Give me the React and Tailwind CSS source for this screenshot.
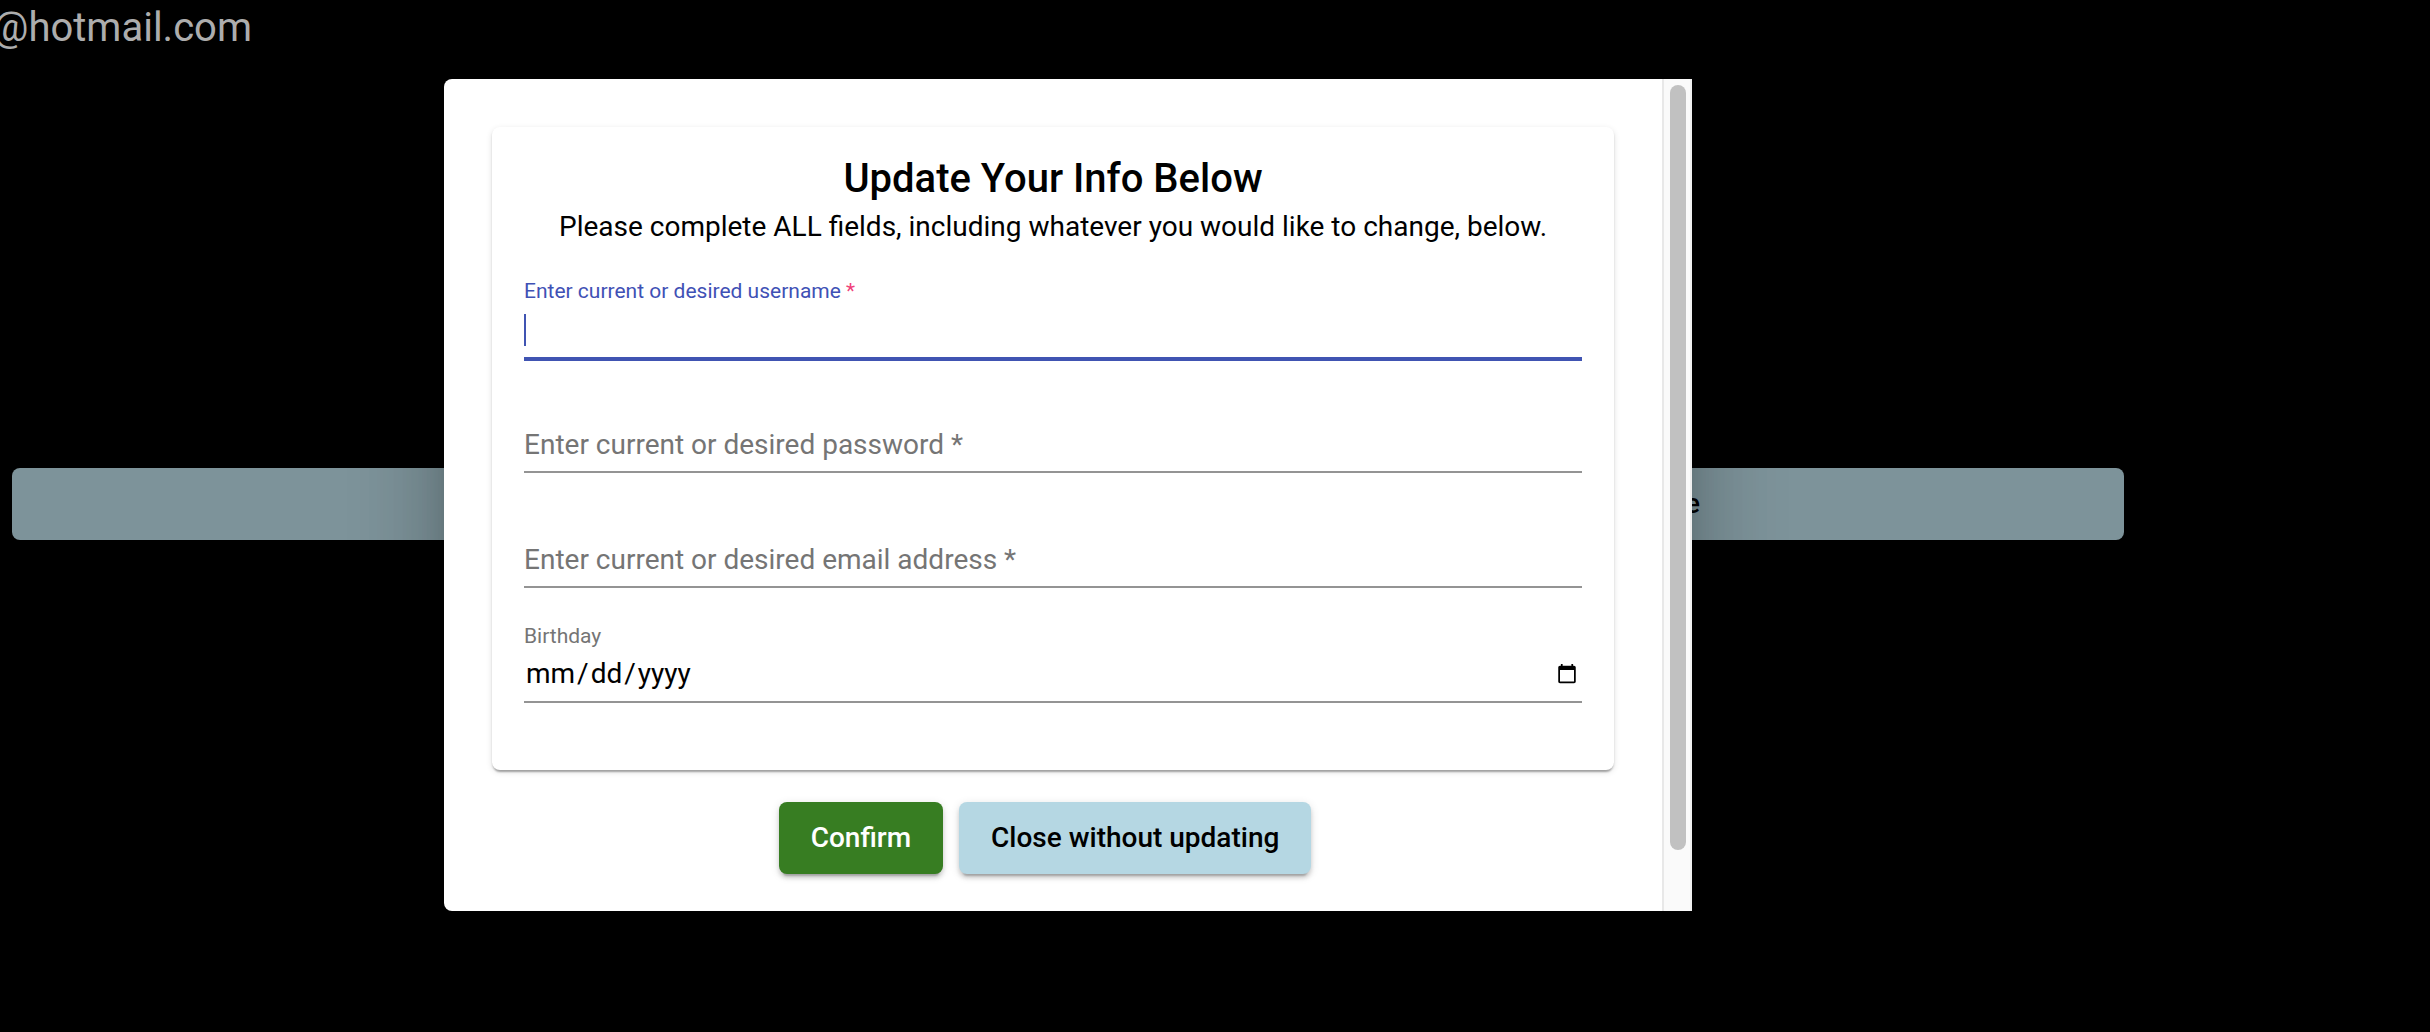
import React from "react";

const CARD_SHADOW =
  "shadow-[0_4px_2px_-2px_rgba(0,0,0,0.2),0_2px_2px_0_rgba(0,0,0,0.14),0_2px_6px_0_rgba(0,0,0,0.12)]";
const BUTTON_SHADOW =
  "shadow-[0_6px_2px_-4px_rgba(0,0,0,0.2),0_4px_4px_0_rgba(0,0,0,0.14),0_2px_10px_0_rgba(0,0,0,0.12)]";
const DIALOG_SHADOW =
  "shadow-[0_22px_30px_-14px_rgba(0,0,0,0.2),0_48px_76px_6px_rgba(0,0,0,0.14),0_18px_92px_16px_rgba(0,0,0,0.12)]";
const DATE_PARTS =
  "[&::-webkit-calendar-picker-indicator]:mr-1 [&::-webkit-calendar-picker-indicator]:h-[22px] [&::-webkit-calendar-picker-indicator]:w-[22px] [&::-webkit-calendar-picker-indicator]:p-0 [&::-webkit-datetime-edit-month-field]:px-[2px] [&::-webkit-datetime-edit-day-field]:px-[2px] [&::-webkit-datetime-edit-year-field]:px-[2px]";

function FloatingField({ id, label, required, active, type = "text" }) {
  return (
    <div className="mb-[35px] flex flex-col">
      <label
        htmlFor={id}
        className={
          active
            ? "text-[21px] leading-[26px] text-[#3f51b5]"
            : "text-[21px] leading-[26px] text-[#757575]"
        }
      >
        {label}
        {required && <span className="text-[#f0417a]"> *</span>}
      </label>
      <div
        className={
          active
            ? "relative mt-[2px] -mb-[3px] h-[55px] border-b-4 border-[#4054b2]"
            : "relative mt-[2px] h-[52px] border-b-2 border-[#949494]"
        }
      >
        <input
          id={id}
          type={type}
          className={`block h-[46px] w-full bg-transparent text-[28px] text-black outline-none ${DATE_PARTS}`}
        />
        {active && (
          <span className="absolute top-2 left-0 h-8 w-0.5 bg-[#4054b2]" />
        )}
      </div>
    </div>
  );
}

function RestingField({ id, label, type }) {
  return (
    <div className="mb-[35px] grid border-b-2 border-[#949494] pt-[30px] pb-1">
      <label
        htmlFor={id}
        className="col-start-1 row-start-1 text-[28px] leading-[44px] text-[#757575]"
      >
        {label} *
      </label>
      <input
        id={id}
        type={type}
        className="col-start-1 row-start-1 h-11 w-full bg-transparent text-[28px] outline-none"
      />
    </div>
  );
}

export default function App() {
  return (
    <div className="relative min-h-screen overflow-hidden bg-black pr-[294px] font-[Roboto,sans-serif]">
      <header className="flex h-[468px] w-[252px] justify-end overflow-hidden">
        <p className="text-[40px] leading-[56px] text-[#adadad]">@hotmail.com</p>
      </header>
      <div className="px-3">
        <button
          type="button"
          className="flex h-[72px] w-full items-center justify-end rounded-lg bg-[#7d939a] pr-[424px] text-[28px] font-medium text-black"
        >
          e
        </button>
      </div>

      <div className="absolute inset-0 flex items-start justify-center pt-[79px] pr-[294px]">
        <div
          role="dialog"
          aria-labelledby="dialog-title"
          className={`flex w-full max-w-[1248px] overflow-hidden rounded-l-lg bg-white ${DIALOG_SHADOW}`}
        >
          <form className="flex-1 px-12 pt-12 pb-[37px]">
            <section className={`rounded-lg bg-white p-8 ${CARD_SHADOW}`}>
              <h1
                id="dialog-title"
                className="text-center text-[40px] leading-10 font-medium text-black"
              >
                Update Your Info Below
              </h1>
              <p className="mt-[6px] mb-[29px] text-center text-[28px] leading-[44px] text-black">
                Please complete ALL fields, including whatever you would like to change, below.
              </p>
              <FloatingField
                id="username"
                label="Enter current or desired username"
                required
                active
              />
              <RestingField
                id="password"
                type="password"
                label="Enter current or desired password"
              />
              <RestingField
                id="email"
                type="email"
                label="Enter current or desired email address"
              />
              <FloatingField id="birthday" label="Birthday" type="date" />
            </section>
            <div className="mt-8 flex justify-center gap-4 pr-4">
              <button
                type="button"
                className={`h-[72px] rounded-lg bg-[#377d22] px-8 text-[28px] font-medium text-white ${BUTTON_SHADOW}`}
              >
                Confirm
              </button>
              <button
                type="button"
                className={`h-[72px] rounded-lg bg-[#b5d7e3] px-8 text-[28px] font-medium text-black ${BUTTON_SHADOW}`}
              >
                Close without updating
              </button>
            </div>
          </form>
          <div className="w-[30px] border-x-2 border-l-[#e8e8e8] border-r-[#f0f0f0] bg-[#fafafa] px-[6px] pt-[6px]">
            <div className="h-[765px] w-4 rounded-full bg-[#c1c1c1]" />
          </div>
        </div>
      </div>
    </div>
  );
}
